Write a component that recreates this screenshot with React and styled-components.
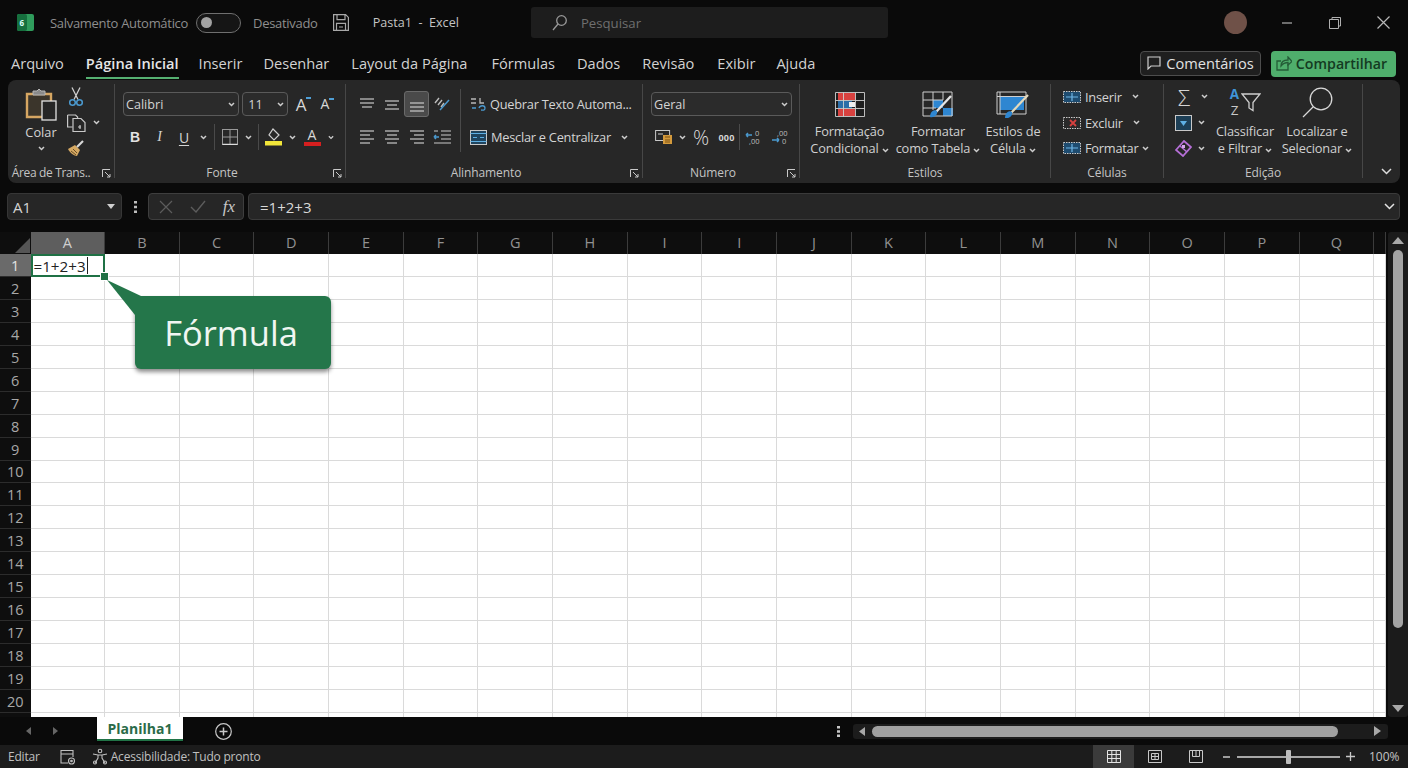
import React from 'react';
import styled, { createGlobalStyle } from 'styled-components';

const Global = createGlobalStyle`
  html, body { margin: 0; padding: 0; background: #0a0a0a; overflow: hidden; }
  * { box-sizing: border-box; }
`;
const FONT = `"Open Sans", "Noto Sans", sans-serif`;

const Page = styled.div`
  width: 1408px; height: 768px; background: #0a0a0a; color: #d4d4d4;
  font-family: ${FONT}; display: flex; flex-direction: column; overflow: hidden;
`;

/* ---------- title bar ---------- */
const TitleBar = styled.header`display: flex; align-items: center; height: 45px; padding-left: 17px; flex: none;`;
const Dim = styled.span`font-size: 13px; letter-spacing: -.3px; color: #8e8e8e; white-space: nowrap; margin-left: ${p => p.$ml || 0}px;`;
const Doc = styled.span`font-size: 12.6px; color: #c4c4c4; white-space: pre; margin-left: 9px;`;
const Toggle = styled.div`
  width: 45px; height: 20px; border: 1.5px solid #6f6f6f; border-radius: 10px; margin-left: 8px;
  display: flex; align-items: center; padding-left: 4px; background: #151515;
  &::before { content: ""; width: 11px; height: 11px; border-radius: 50%; background: #a2a2a2; }
`;
const SearchBox = styled.div`
  width: 357px; height: 31px; margin-left: 72px; background: #1d1d1d; border-radius: 3px;
  display: flex; align-items: center; gap: 14px; padding-left: 21px; font-size: 13.2px; color: #6f6f6f;
`;
const WinControls = styled.div`margin-left: auto; display: flex; align-items: center; padding-right: 1px;`;
const Avatar = styled.div`width: 23px; height: 23px; border-radius: 50%; background: #6f5148; margin-right: 16px;`;
const WinBtn = styled.div`width: 48px; display: flex; justify-content: center;`;

/* ---------- tabs ---------- */
const TabRow = styled.nav`display: flex; align-items: center; height: 35px; padding-left: 11px; flex: none;`;
const RibbonTab = styled.div`
  font-size: 14.6px; color: #d2d2d2; margin-right: ${p => p.$mr}px; white-space: nowrap; position: relative; line-height: 26px;
  font-weight: ${p => (p.$active ? 600 : 400)};
  ${p => p.$active && `color:#e6e6e6; &::after{content:"";position:absolute;left:0;right:0;bottom:-3px;height:2px;background:#55b071;}`}
`;
const TabActions = styled.div`margin-left: auto; display: flex; gap: 10px; padding-right: 12px; margin-top: 2px;`;
const CommentBtn = styled.div`
  width: 121px; height: 25px; border: 1px solid #4d4d4d; border-radius: 4px; background: #1f1f1f;
  display: flex; align-items: center; justify-content: center; gap: 5px; font-size: 14.6px; color: #e2e2e2; font-weight: 500;
`;
const ShareBtn = styled.div`
  width: 125px; height: 26px; border-radius: 4px; background: #4fae6c; padding-right: 4px;
  display: flex; align-items: center; justify-content: center; gap: 4px; font-size: 14.2px; color: #143a22; font-weight: 600;
`;

/* ---------- ribbon ---------- */
const Ribbon = styled.section`
  display: flex; flex: none; height: 103px; width: 1392px; margin-left: 8px; padding: 4px 0 5px;
  background: #272727; border-radius: 8px;
`;
const Group = styled.div`
  width: ${p => p.$w}px; flex: none; display: flex; flex-direction: column;
  ${p => !p.$last && 'border-right: 1px solid #474747;'}
`;
const GroupBody = styled.div`flex: 1; display: flex; min-height: 0;`;
const GroupFoot = styled.div`height: 12px; padding-top: 2px; display: flex; align-items: center; font-size: 12px; letter-spacing: -.1px; color: #c4c4c4; line-height: 10px;`;
const FootText = styled.span`flex: 1; text-align: center; white-space: nowrap; padding-right: ${p => p.$pr || 0}px; letter-spacing: ${p => p.$ls || 'inherit'};`;
const Launcher = styled.span`width: 16px; display: flex; justify-content: center;`;
const Stack = styled.div`display: flex; flex-direction: column; padding-top: ${p => p.$pt ?? 8}px; gap: ${p => p.$gap ?? 9}px; padding-left: ${p => p.$pl || 0}px;`;
const Row = styled.div`display: flex; align-items: center; height: ${p => p.$h || 24}px;`;
const Tool = styled.div`
  width: ${p => p.$w}px; height: ${p => p.$h || 24}px; flex: none; display: flex; align-items: center; justify-content: center;
  font-size: 13px; color: #d4d4d4; border-radius: 3px; margin-left: ${p => p.$ml || 0}px;
  ${p => p.$active && 'background:#4a4a4a; border:1px solid #6a6a6a; height:26px;'}
`;
const Select = styled.div`
  width: ${p => p.$w}px; height: 24px; border: 1px solid #5a5a5a; border-radius: 4px; background: #2b2b2b;
  display: flex; align-items: center; justify-content: space-between; padding: 0 3px 0 2px; font-size: 12.6px; color: #d4d4d4;
  margin-right: ${p => p.$mr || 0}px; flex: none;
`;
const VSep = styled.div`width: 1px; height: ${p => p.$h || 26}px; background: #4a4a4a; margin: ${p => p.$mt || 0}px ${p => p.$mr ?? 0}px 0 ${p => p.$ml ?? 0}px; flex: none;`;
const Label = styled.span`font-size: 12.8px; letter-spacing: -.25px; color: #d4d4d4; white-space: nowrap; margin-left: ${p => p.$ml || 0}px; margin-right: ${p => p.$mr || 0}px;`;
const PasteCol = styled.div`width: 50px; margin-left: 8px; display: flex; flex-direction: column; align-items: center; padding-top: 4px; flex: none;`;
const PasteText = styled.div`font-size: 12.8px; line-height: 18px; margin: 2px 0 5px;`;
const SmallRows = styled.div`display: flex; flex-direction: column; padding-left: ${p => p.$pl || 0}px; width: ${p => p.$w || 'auto'}; flex: none;`;
const SmallRow = styled.div`display: flex; align-items: center; height: 25.7px;`;
const BigBtn = styled.div`
  width: ${p => p.$w}px; flex: none; display: flex; flex-direction: column; align-items: center; padding-top: ${p => p.$pt ?? 7}px;
  margin-left: ${p => p.$ml || 0}px;
`;
const BigIcon = styled.div`height: ${p => p.$h || 26}px; display: flex; align-items: center; justify-content: center; margin-bottom: ${p => p.$mb ?? 6}px;`;
const BigText = styled.div`font-size: 12.8px; letter-spacing: -.15px; line-height: 17px; text-align: center; white-space: nowrap; color: #d0d0d0;`;
const BoldB = styled.span`font-weight: 800; font-size: 14px; color: #e2e2e2; font-family: "Liberation Sans", sans-serif;`;
const ItalicI = styled.span`font-style: italic; font-size: 14px; font-family: "Liberation Serif", serif;`;
const UnderU = styled.span`text-decoration: underline; font-size: 14px; text-underline-offset: 2px;`;
const GlyphA = styled.span`font-size: ${p => p.$s}px; color: #d8d8d8; position: relative; line-height: 1;`;
const Caret = styled.i`position: absolute; right: -5px; top: 1px; width: 5px; height: 2px; background: #4f9fd6;`;
const ColorA = styled.div`display: flex; flex-direction: column; align-items: center; width: 17px;`;
const ColorGlyph = styled.span`font-size: 14px; line-height: 13px; color: #d8d8d8;`;
const ColorBar = styled.i`width: 17px; height: 4px; background: #d61f1f; margin-top: 1px;`;
const Percent = styled.span`font-size: 20px; font-weight: 300; color: #dcdcdc;`;
const Thousand = styled.span`font-size: 9px; font-weight: 700; letter-spacing: .2px;`;
const Sigma = styled.span`font-size: 22px; font-weight: 300; line-height: 1;`;
const SortWrap = styled.div`display: flex; align-items: center; width: 34px; height: 30px;`;
const SortLetters = styled.div`display: flex; flex-direction: column; align-items: center; gap: 1px; width: 13px; flex: none;`;
const SortA = styled.span`font-size: 13.5px; font-weight: 700; line-height: 15px; color: #3f94d8;`;
const SortZ = styled.span`font-size: 13.5px; line-height: 15px; color: #c9c9c9;`;
const Collapse = styled.div`flex: 1; display: flex; align-items: flex-end; justify-content: center; padding: 0 0 3px 10px;`;

/* ---------- formula bar ---------- */
const FormulaBar = styled.div`display: flex; align-items: stretch; height: 27px; margin-top: 10px; padding: 0 8px 0 7px; flex: none;`;
const NameBox = styled.div`
  width: 115px; background: #262626; border: 1px solid #363636; border-radius: 4px; display: flex; align-items: center;
  justify-content: space-between; padding: 0 6px 0 5px; font-size: 15px; color: #d4d4d4;
`;
const Dots = styled.div`width: 26px; display: flex; align-items: center; justify-content: center;`;
const FxBox = styled.div`
  width: 96px; background: #262626; border: 1px solid #3e3e3e; border-radius: 4px; margin-right: 4px; display: flex; align-items: center; justify-content: space-between; padding: 0 8px 0 10px;
`;
const Fx = styled.span`font-family: "Liberation Serif", serif; font-style: italic; font-size: 17px; color: #c8c8c8;`;
const FormulaInput = styled.div`
  flex: 1; background: #262626; border: 1px solid #3a3a3a; border-radius: 4px; display: flex; align-items: center; justify-content: space-between;
  padding: 0 4px 0 11px; font-size: 15px; color: #d8d8d8;
`;

/* ---------- sheet ---------- */
const SheetWrap = styled.div`display: flex; height: 485px; margin-top: 12px; flex: none;`;
const GridArea = styled.div`width: 1386px; height: 485px; overflow: hidden; position: relative; flex: none;`;
const GridTable = styled.div`
  display: grid; grid-template-columns: 30.5px repeat(18, 74.67px) 1fr; grid-template-rows: 21.5px 23.5px repeat(20, 22.95px);
`;
const Corner = styled.div`background: #0e0e0e; display: flex; align-items: flex-end; justify-content: flex-end; padding: 0 1px 1px 0;`;
const ColHead = styled.div`
  background: ${p => (p.$sel ? '#5e5e5e' : '#0e0e0e')}; color: ${p => (p.$sel ? '#cfcfcf' : '#929292')};
  border-right: 1px solid #3c3c3c; font-size: 14.5px; display: flex; align-items: center; justify-content: center;
`;
const RowHead = styled.div`
  background: ${p => (p.$sel ? '#6a6a6a' : '#0e0e0e')}; color: ${p => (p.$sel ? '#e2e2e2' : '#a8a8a8')}; padding-top: 1px;
  font-size: 14.5px; display: flex; align-items: center; justify-content: center; border-bottom: 1px solid #2c2c2c;
`;
const Cell = styled.div`background: #fff; border-right: 1px solid #dadada; border-bottom: 1px solid #dadada;`;
const ActiveCell = styled.div`
  background: #fff; border: 2px solid #1f7145; position: relative; font-size: 15.2px; color: #222; line-height: 20px; padding: 1px 0 0 1px;
  display: flex; align-items: center; white-space: nowrap;
  &::after { content: ""; position: absolute; right: -6px; bottom: -6px; width: 7px; height: 7px; background: #1f7145; border: 1px solid #fff; }
`;
const TextCaret = styled.i`width: 1px; height: 17px; background: #222; margin-left: 1px;`;
const Callout = styled.div`
  position: absolute; left: 135px; top: 64px; width: 196px; height: 73px; background: #24764a; border-radius: 6px; padding-right: 4px;
  box-shadow: 0 3px 4px rgba(0,0,0,.45); color: #f0f6f2; font-size: 34.5px; display: flex; align-items: center; justify-content: center; z-index: 2;
`;
const CalloutTail = styled.svg`position: absolute; left: -30px; top: -20px;`;
const VScroll = styled.div`
  width: 20px; margin-left: 2px; background: #1b1b1b; border-radius: 3px; display: flex; flex-direction: column; align-items: center; padding: 5px 0 5px; flex: none;
`;
const VThumb = styled.div`width: 10px; height: 378px; margin: 6px 0 auto; background: #a3a3a3; border-radius: 5px;`;

/* ---------- sheet tabs ---------- */
const SheetBar = styled.div`display: flex; align-items: flex-start; height: 28px; flex: none;`;
const NavArrows = styled.div`width: 97px; height: 28px; display: flex; align-items: center; padding-left: 26px; gap: 22px;`;
const SheetTab = styled.div`
  width: 86px; height: 24px; background: #fff; border-bottom: 2px solid #217346; color: #2b6b49; font-weight: 700; font-size: 14px;
  display: flex; align-items: center; justify-content: center; box-shadow: 0 1px 2px rgba(0,0,0,.5);
`;
const AddBtn = styled.div`width: 80px; height: 28px; display: flex; align-items: center; justify-content: center;`;
const BarRight = styled.div`margin-left: auto; display: flex; align-items: center; height: 28px; padding-right: 20px;`;
const HScroll = styled.div`
  width: 535px; height: 15px; margin-left: 13px; background: #1c1c1c; border-radius: 3px; display: flex; align-items: center; padding: 0 6px;
`;
const HThumb = styled.div`width: 466px; height: 11px; background: #a0a0a0; border-radius: 6px; margin-left: 7px; margin-right: 36px;`;

/* ---------- status ---------- */
const StatusBar = styled.footer`display: flex; align-items: center; height: 23px; background: #1c1c1c; font-size: 12px; letter-spacing: -.2px; color: #c0c0c0; flex: none; padding-left: 8px;`;
const StatusItem = styled.span`margin-left: ${p => p.$ml || 0}px; white-space: nowrap; display: flex;`;
const StatusRight = styled.div`margin-left: auto; display: flex; align-items: center; height: 100%;`;
const ViewBtn = styled.div`
  width: 41px; height: 100%; display: flex; align-items: center; justify-content: center; ${p => p.$active && 'background:#3b3b3b;'}
`;
const ZoomMinus = styled.span`margin-left: 6px; display: flex;`;
const Slider = styled.div`
  width: 103px; height: 2px; background: #a8a8a8; position: relative; margin: 0 6px;
  &::after { content: ""; position: absolute; left: 49px; top: -6px; width: 5px; height: 14px; background: #bdbdbd; border-radius: 1px; }
`;
const Zoom = styled.span`margin-left: 14px; width: 39px; font-size: 12px; letter-spacing: 0; color: #c4c4c4;`;

/* ---------- icons ---------- */
const G = '#c9c9c9';
const Ic = ({ w, h, children, sw = 1.2 }) => (
  <svg width={w} height={h} viewBox={`0 0 ${w} ${h}`} fill="none" stroke={G} strokeWidth={sw}>{children}</svg>
);
const Chev = ({ c = '#cdcdcd' }) => (
  <Ic w={7} h={5} sw={1.5}><path d="M1 1l2.500 2.500L6 1" stroke={c} /></Ic>
);
const Lines = ({ rows }) => (
  <Ic w={18} h={16}>{rows.map(([a, b, y], i) => <path key={i} d={`M${a} ${y}H${b}`} />)}</Ic>
);
const LauncherIcon = () => (
  <Ic w={9} h={9} sw={1}><path d="M.5 8V.5H8M3 3l5 5M5 8h3V5" /></Ic>
);
const Logo = () => (
  <svg width="17" height="17" viewBox="0 0 17 17">
    <rect width="17" height="17" rx="2" fill="#2f9c5c" />
    <rect width="10" height="17" rx="2" fill="#166f3e" />
    <text x="2.5" y="12" fontSize="8" fontWeight="700" fill="#dff" fontFamily="Open Sans">6</text>
  </svg>
);
const SaveIcon = () => (
  <Ic w={16} h={17} sw={1.2}><path d="M.6.6h12l2.800 2.800v13H.6zM4 .6v5h8v-5M3.500 16.400v-7h9v7M6 13h4" stroke="#a8a8a8" /></Ic>
);
const SearchGlyph = () => (
  <Ic w={15} h={16} sw={1.3}><circle cx="9.500" cy="5.500" r="4.800" stroke="#999" /><path d="M6 9l-5 6" stroke="#999" /></Ic>
);
const PasteIcon = () => (
  <svg width="32" height="33" viewBox="0 0 32 33" fill="none">
    <path d="M2 6h24v23H2z" fill="#3b352b" stroke="#d6a662" strokeWidth="2.400" />
    <path d="M8 6V3h4l2-2 2 2h4v4H8z" fill="#8a8a8a" stroke="#b5b5b5" />
    <rect x="17" y="13" width="14" height="19" fill="#262626" stroke="#e2e2e2" strokeWidth="1.300" />
  </svg>
);
const Scissors = () => (
  <svg width="14" height="20" viewBox="0 0 14 20" fill="none">
    <path d="M3 .5l6 12M11 .5l-6 12" stroke="#cfcfcf" strokeWidth="1.300" />
    <circle cx="3.500" cy="15.500" r="2.800" stroke="#4b9ad0" strokeWidth="1.500" />
    <circle cx="10.500" cy="15.500" r="2.800" stroke="#4b9ad0" strokeWidth="1.500" />
  </svg>
);
const CopyIcon = () => (
  <Ic w={19} h={18}><path d="M.6 1h8l2 2v1M.6 1v12h5" /><path d="M6 4.500h8l4 4v9H6z" /><path d="M11 13h3M13 11v4" /></Ic>
);
const Brush = () => (
  <svg width="18" height="17" viewBox="0 0 18 17" fill="none">
    <path d="M1 9l7-4 5 5-3 6C7 16 3 13 1 9z" fill="#d5a862" />
    <path d="M10 7l6-6" stroke="#d8d8d8" strokeWidth="2.200" />
    <path d="M4 11l5 4M6 9l4 4" stroke="#6b4f26" />
  </svg>
);
const BorderIcon = () => (
  <Ic w={16} h={16} sw={1}><rect x=".5" y=".5" width="15" height="15" stroke="#999" /><path d="M8 .5v15M.5 8h15" stroke="#999" /><path d="M.5 15.500h15" stroke="#ddd" strokeWidth="1.500" /></Ic>
);
const FillIcon = () => (
  <svg width="17" height="18" viewBox="0 0 17 18" fill="none">
    <path d="M8 1l6 6-5 5-5-5z" stroke="#cfcfcf" strokeWidth="1.200" />
    <rect y="13" width="17" height="4.500" fill="#f2e63a" />
  </svg>
);
const WrapDiag = () => (
  <svg width="17" height="16" viewBox="0 0 17 16" fill="none">
    <path d="M2 7l4-5M5 9l4-5M8 11l3-4" stroke="#bdbdbd" strokeWidth="1.400" />
    <path d="M7 14L16 4" stroke="#4b9ad0" strokeWidth="1.500" />
  </svg>
);
const IndentIcon = () => (
  <svg width="18" height="14" viewBox="0 0 18 14" fill="none" stroke="#c9c9c9" strokeWidth="1.200">
    <path d="M8 1h10M8 5h10M8 9h10M1 13h17M1 1h4" />
    <path d="M1 7h5M1 7l2-2M1 7l2 2" stroke="#4b9ad0" strokeWidth="1.500" />
  </svg>
);
const WrapText = () => (
  <svg width="16" height="16" viewBox="0 0 16 16" fill="none">
    <path d="M1 3h5M1 7h5M10 2v5h4" stroke="#b8b8b8" strokeWidth="1.300" />
    <path d="M2 12h4M9 12c1-3 6-3 6 0s-3 2-4 2" stroke="#4b9ad0" strokeWidth="1.300" />
  </svg>
);
const MergeIcon = () => (
  <svg width="17" height="15" viewBox="0 0 17 15" fill="none">
    <rect x=".5" y=".5" width="16" height="14" fill="#20445e" stroke="#c9c9c9" />
    <path d="M3 7.500h4M14 7.500h-4M.5 3.500h16M.5 11.500h16" stroke="#5fb0e4" strokeWidth="1.100" />
  </svg>
);
const AcctIcon = () => (
  <svg width="18" height="16" viewBox="0 0 18 16" fill="none">
    <rect x=".6" y="1.500" width="14" height="10" stroke="#c9c9c9" />
    <path d="M3 5h5" stroke="#c9c9c9" />
    <rect x="8" y="6" width="9" height="9" fill="#d49a3c" />
    <path d="M10 8h5M10 11h5M10 13h5" stroke="#7a5314" />
  </svg>
);
const DecUp = () => (
  <svg width="20" height="16" viewBox="0 0 20 16">
    <path d="M1 6h6M1 6l2-2M1 6l2 2" stroke="#4b9ad0" strokeWidth="1.500" fill="none" />
    <text x="10" y="7" fontSize="7.500" fill="#bdbdbd" fontFamily="Open Sans">0</text>
    <text x="4" y="15" fontSize="7.500" fill="#bdbdbd" fontFamily="Open Sans">,00</text>
  </svg>
);
const DecDown = () => (
  <svg width="20" height="16" viewBox="0 0 20 16">
    <text x="6" y="7" fontSize="7.500" fill="#bdbdbd" fontFamily="Open Sans">,00</text>
    <path d="M1 11h7M8 11l-2-2M8 11l-2 2" stroke="#4b9ad0" strokeWidth="1.500" fill="none" />
    <text x="11" y="15" fontSize="7.500" fill="#bdbdbd" fontFamily="Open Sans">0</text>
  </svg>
);
const CondFormat = () => (
  <svg width="30" height="25" viewBox="0 0 30 25" fill="none">
    <rect x=".5" y=".5" width="29" height="24" fill="#1e1e1e" />
    <rect x="3" y="1" width="17" height="7" fill="#d8413f" />
    <rect x="3" y="17" width="17" height="7" fill="#d8413f" />
    <rect x="3" y="9" width="14" height="7" fill="#2c6ea8" />
    <rect x="14" y="10" width="6" height="5" fill="#eee" />
    <path d="M.5.500h29v24H.5zM.5 8.500h29M.5 16.500h29M8.500.5v24M20.500.5v24" stroke="#cfcfcf" strokeWidth=".9" />
  </svg>
);
const TableFormat = () => (
  <svg width="33" height="27" viewBox="0 0 33 27" fill="none">
    <rect x="11" y="9" width="10" height="8" fill="#2e86d1" />
    <rect x="21" y="17" width="10" height="8" fill="#2e86d1" />
    <path d="M1 1h29v24H1zM1 9h20M1 17h13M11 1v18M21 1v8" stroke="#cfcfcf" strokeWidth="1" />
    <path d="M14 21L29 5" stroke="#e4e4e4" strokeWidth="2.400" />
    <path d="M8 26c0-5 4-8 7-6 1 4-3 7-7 6z" fill="#2e86d1" />
  </svg>
);
const CellStyle = () => (
  <svg width="34" height="27" viewBox="0 0 34 27" fill="none">
    <rect x="4" y="6" width="24" height="13" fill="#2e86d1" />
    <path d="M1 1h29v22H1zM1 5.500h29M4 1v22" stroke="#cfcfcf" strokeWidth="1" />
    <path d="M15 22L32 4" stroke="#e4d9bb" strokeWidth="2.200" />
    <path d="M9 27c0-5 4-8 7-6 1 4-3 7-7 6z" fill="#2e86d1" />
  </svg>
);
const CellIcon = ({ kind }) => (
  <svg width="18" height="16" viewBox="0 0 18 16" fill="none">
    <rect x=".5" y="2.500" width="17" height="11" fill={kind === 'del' ? '#2a2a2a' : '#1e4c70'} stroke="#c9c9c9" strokeDasharray="1.500 1" />
    {kind === 'del'
      ? <path d="M7 5l6 6M13 5l-6 6" stroke="#d8413f" strokeWidth="1.800" />
      : <path d="M3 8h12M9 4v8" stroke="#6fb6e6" strokeWidth="1.200" />}
  </svg>
);
const FillDown = () => (
  <svg width="17" height="16" viewBox="0 0 17 16" fill="none">
    <rect x=".5" y=".5" width="16" height="15" fill="#1d3f56" stroke="#c9c9c9" />
    <path d="M5 6h7l-3.500 5z" fill="#5fb0e4" />
  </svg>
);
const Eraser = () => (
  <svg width="17" height="17" viewBox="0 0 17 17" fill="none">
    <path d="M1 10l8-9 7 6-8 9z" stroke="#b56fd6" strokeWidth="1.800" />
    <path d="M5 6l7 6" stroke="#b56fd6" strokeWidth="1.600" />
    <rect x="7" y="5" width="3" height="3" fill="#d6a6ea" />
  </svg>
);
const Funnel = () => (
  <svg width="20" height="19" viewBox="0 0 20 19" fill="none">
    <path d="M1 1h18l-7 8.500v8l-4-2.500V9.500z" stroke="#cfcfcf" strokeWidth="1.300" />
  </svg>
);
const FindIcon = () => (
  <svg width="31" height="31" viewBox="0 0 31 31" fill="none" stroke="#d8d8d8" strokeWidth="1.300">
    <circle cx="19" cy="12" r="10.800" />
    <path d="M11.500 19.500L1 30" />
  </svg>
);
const Cmnt = () => <Ic w={14} h={14}><path d="M1 1h12v9H4l-3 3z" stroke="#cfcfcf" /></Ic>;
const ShareIcon = () => (
  <svg width="16" height="15" viewBox="0 0 16 15" fill="none" stroke="#245c37" strokeWidth="1.300">
    <path d="M12 8v6H1V5h4" /><path d="M5 10c0-4 3-6 7-6V1l4 4.500L12 9V6.500c-3 0-5 1-7 3.500z" />
  </svg>
);
const CalendarIcon = () => (
  <svg width="15" height="16" viewBox="0 0 15 16" fill="none" stroke="#c0c0c0" strokeWidth="1.100">
    <path d="M8 14H1V1.500h12V8M1 5h12" /><circle cx="11.500" cy="12" r="3" /><circle cx="11.500" cy="12" r=".8" fill="#c0c0c0" />
  </svg>
);
const A11yIcon = () => (
  <svg width="17" height="17" viewBox="0 0 17 17" fill="none" stroke="#c0c0c0" strokeWidth="1.100">
    <circle cx="8" cy="3" r="1.800" /><path d="M1 6l5 1h4l5-1M6 7v3l-3 5M10 7v3l3 5" />
    <circle cx="3" cy="14.500" r="1.500" /><circle cx="13" cy="14.500" r="1.500" />
  </svg>
);

/* ---------- data ---------- */
const tabs = [
  ['Arquivo', 22], ['Página Inicial', 20], ['Inserir', 21], ['Desenhar', 22], ['Layout da Página', 24],
  ['Fórmulas', 22], ['Dados', 22], ['Revisão', 23], ['Exibir', 21], ['Ajuda', 0],
];
const cols = ['A', 'B', 'C', 'D', 'E', 'F', 'G', 'H', 'I', 'I', 'J', 'K', 'L', 'M', 'N', 'O', 'P', 'Q', ''];
const rows = Array.from({ length: 21 }, (_, i) => i + 1);

const Foot = ({ text, launcher, pr, ls }) => (
  <GroupFoot>
    <FootText $pr={pr} $ls={ls}>{text}</FootText>
    {launcher && <Launcher><LauncherIcon /></Launcher>}
  </GroupFoot>
);

export default function App() {
  return (
    <Page>
      <Global />
      <TitleBar>
        <Logo />
        <Dim $ml={16}>Salvamento Automático</Dim>
        <Toggle />
        <Dim $ml={12}>Desativado</Dim>
        <Tool $w={46}><SaveIcon /></Tool>
        <Doc>Pasta1  -  Excel</Doc>
        <SearchBox><SearchGlyph />Pesquisar</SearchBox>
        <WinControls>
          <Avatar />
          <WinBtn><Ic w={10} h={2}><path d="M0 1h10" stroke="#b0b0b0" /></Ic></WinBtn>
          <WinBtn><Ic w={12} h={12} sw={1}><path d="M3 2.500V.5h8.500V9H9.500M.5 2.500h9v9h-9z" stroke="#b0b0b0" /></Ic></WinBtn>
          <WinBtn><Ic w={13} h={13}><path d="M.5.500l12 12M12.500.500l-12 12" stroke="#b8b8b8" /></Ic></WinBtn>
        </WinControls>
      </TitleBar>

      <TabRow>
        {tabs.map(([t, m], i) => <RibbonTab key={t} $mr={m} $active={i === 1}>{t}</RibbonTab>)}
        <TabActions>
          <CommentBtn><Cmnt />Comentários</CommentBtn>
          <ShareBtn><ShareIcon />Compartilhar</ShareBtn>
        </TabActions>
      </TabRow>

      <Ribbon>
        <Group $w={107}>
          <GroupBody>
            <PasteCol>
              <PasteIcon />
              <PasteText>Colar</PasteText>
              <Chev />
            </PasteCol>
            <SmallRows>
              <SmallRow><Tool $w={20}><Scissors /></Tool></SmallRow>
              <SmallRow><Tool $w={20}><CopyIcon /></Tool><Tool $w={12} $ml={4}><Chev /></Tool></SmallRow>
              <SmallRow><Tool $w={20}><Brush /></Tool></SmallRow>
            </SmallRows>
          </GroupBody>
          <Foot text="Área de Trans.." launcher pr={4} ls="-.35px" />
        </Group>

        <Group $w={231}>
          <GroupBody>
            <Stack $pl={8}>
              <Row>
                <Select $w={116} $mr={3}>Calibri<Chev /></Select>
                <Select $w={46} $mr={1}>&nbsp;11<Chev /></Select>
                <Tool $w={24}><GlyphA $s={17}>A<Caret /></GlyphA></Tool>
                <Tool $w={24}><GlyphA $s={14}>A<Caret /></GlyphA></Tool>
              </Row>
              <Row>
                <Tool $w={24}><BoldB>B</BoldB></Tool>
                <Tool $w={25}><ItalicI>I</ItalicI></Tool>
                <Tool $w={24}><UnderU>U</UnderU></Tool>
                <Tool $w={14}><Chev /></Tool>
                <VSep $ml={4} />
                <Tool $w={29}><BorderIcon /></Tool>
                <Tool $w={8}><Chev /></Tool>
                <VSep $ml={6} />
                <Tool $w={29}><FillIcon /></Tool>
                <Tool $w={8}><Chev /></Tool>
                <Tool $w={32}><ColorA><ColorGlyph>A</ColorGlyph><ColorBar /></ColorA></Tool>
                <Tool $w={6}><Chev /></Tool>
              </Row>
            </Stack>
          </GroupBody>
          <Foot text="Fonte" launcher />
        </Group>

        <Group $w={297}>
          <GroupBody>
            <Stack $pl={8}>
              <Row>
                <Tool $w={25}><Lines rows={[[2, 16, 3], [2, 16, 7], [4, 14, 11]]} /></Tool>
                <Tool $w={25}><Lines rows={[[2, 16, 5], [4, 14, 9], [2, 16, 13]]} /></Tool>
                <Tool $w={25} $active><Lines rows={[[2, 16, 7], [2, 16, 11], [2, 16, 15]]} /></Tool>
                <Tool $w={25}><WrapDiag /></Tool>
              </Row>
              <Row>
                <Tool $w={25}><Lines rows={[[2, 16, 2], [2, 12, 6], [2, 16, 10], [2, 12, 14]]} /></Tool>
                <Tool $w={25}><Lines rows={[[2, 16, 2], [4, 14, 6], [2, 16, 10], [4, 14, 14]]} /></Tool>
                <Tool $w={25}><Lines rows={[[2, 16, 2], [6, 16, 6], [2, 16, 10], [6, 16, 14]]} /></Tool>
                <Tool $w={25}><IndentIcon /></Tool>
              </Row>
            </Stack>
            <VSep $h={63} $ml={6} $mr={9} $mt={5} />
            <Stack>
              <Row><WrapText /><Label $ml={4}>Quebrar Texto Automa...</Label></Row>
              <Row><MergeIcon /><Label $ml={4}>Mesclar e Centralizar</Label><Tool $w={10} $ml={9}><Chev /></Tool></Row>
            </Stack>
          </GroupBody>
          <Foot text="Alinhamento" launcher />
        </Group>

        <Group $w={157}>
          <GroupBody>
            <Stack $pl={8}>
              <Row><Select $w={141}>Geral<Chev /></Select></Row>
              <Row>
                <Tool $w={25}><AcctIcon /></Tool>
                <Tool $w={12}><Chev /></Tool>
                <Tool $w={26}><Percent>%</Percent></Tool>
                <Tool $w={25}><Thousand>000</Thousand></Tool>
                <VSep />
                <Tool $w={29}><DecUp /></Tool>
                <Tool $w={24}><DecDown /></Tool>
              </Row>
            </Stack>
          </GroupBody>
          <Foot text="Número" launcher />
        </Group>

        <Group $w={251}>
          <GroupBody>
            <BigBtn $w={93} $ml={3}>
              <BigIcon><CondFormat /></BigIcon>
              <BigText>Formatação<br />Condicional <Chev /></BigText>
            </BigBtn>
            <BigBtn $w={84}>
              <BigIcon><TableFormat /></BigIcon>
              <BigText>Formatar<br />como Tabela <Chev /></BigText>
            </BigBtn>
            <BigBtn $w={64} $ml={1}>
              <BigIcon><CellStyle /></BigIcon>
              <BigText>Estilos de<br />Célula <Chev /></BigText>
            </BigBtn>
          </GroupBody>
          <Foot text="Estilos" />
        </Group>

        <Group $w={113}>
          <GroupBody>
            <SmallRows $pl={12}>
              <SmallRow><CellIcon /><Label $ml={4} $mr={10}>Inserir</Label><Chev /></SmallRow>
              <SmallRow><CellIcon kind="del" /><Label $ml={4} $mr={10}>Excluir</Label><Chev /></SmallRow>
              <SmallRow><CellIcon /><Label $ml={4} $mr={4}>Formatar</Label><Chev /></SmallRow>
            </SmallRows>
          </GroupBody>
          <Foot text="Células" />
        </Group>

        <Group $w={199}>
          <GroupBody>
            <SmallRows $pl={11} $w="46px">
              <SmallRow><Tool $w={18}><Sigma>Σ</Sigma></Tool><Tool $w={12} $ml={5}><Chev /></Tool></SmallRow>
              <SmallRow><FillDown /><Tool $w={12} $ml={3}><Chev /></Tool></SmallRow>
              <SmallRow><Eraser /><Tool $w={12} $ml={3}><Chev /></Tool></SmallRow>
            </SmallRows>
            <BigBtn $w={70} $pt={3}>
              <BigIcon $h={31} $mb={5}>
                <SortWrap>
                  <SortLetters><SortA>A</SortA><SortZ>Z</SortZ></SortLetters>
                  <Funnel />
                </SortWrap>
              </BigIcon>
              <BigText>Classificar<br />e Filtrar <Chev /></BigText>
            </BigBtn>
            <BigBtn $w={74} $pt={3}>
              <BigIcon $h={31} $mb={5}><FindIcon /></BigIcon>
              <BigText>Localizar e<br />Selecionar <Chev /></BigText>
            </BigBtn>
          </GroupBody>
          <Foot text="Edição" />
        </Group>

        <Group $w={37} $last>
          <Collapse><Ic w={11} h={7} sw={1.5}><path d="M1 1l4.500 4.500L10 1" stroke="#dcdcdc" /></Ic></Collapse>
        </Group>
      </Ribbon>

      <FormulaBar>
        <NameBox>A1<svg width="8" height="5" viewBox="0 0 8 5"><path d="M0 0h8L4 5z" fill="#cfcfcf" /></svg></NameBox>
        <Dots><svg width="3" height="12" viewBox="0 0 3 12"><path d="M0 0h3v2.500H0zM0 4.700h3v2.500H0zM0 9.500h3V12H0z" fill="#bdbdbd" /></svg></Dots>
        <FxBox>
          <Ic w={14} h={14}><path d="M1 1l12 12M13 1L1 13" stroke="#5c5c5c" /></Ic>
          <Ic w={16} h={13} sw={1.4}><path d="M1 7l5 5L15 1" stroke="#5c5c5c" /></Ic>
          <Fx>fx</Fx>
        </FxBox>
        <FormulaInput>=1+2+3<Ic w={11} h={7} sw={1.5}><path d="M1 1l4.500 4.500L10 1" stroke="#e4e4e4" /></Ic></FormulaInput>
      </FormulaBar>

      <SheetWrap>
        <GridArea>
          <GridTable>
            <Corner><svg width="15" height="15" viewBox="0 0 15 15"><path d="M15 0v15H0z" fill="#555" /></svg></Corner>
            {cols.map((c, i) => <ColHead key={i} $sel={i === 0}>{c}</ColHead>)}
            {rows.map(r => (
              <React.Fragment key={r}>
                <RowHead $sel={r === 1}>{r <= 20 ? r : ''}</RowHead>
                {cols.map((c, i) => (r === 1 && i === 0
                  ? <ActiveCell key={i}>=1+2+3<TextCaret /></ActiveCell>
                  : <Cell key={i} />))}
              </React.Fragment>
            ))}
          </GridTable>
          <Callout>
            <CalloutTail width="60" height="60" viewBox="0 0 60 60"><path d="M2 4L36 20V39H30z" fill="#24764a" /></CalloutTail>
            Fórmula
          </Callout>
        </GridArea>
        <VScroll>
          <svg width="12" height="7" viewBox="0 0 12 7"><path d="M6 0l6 7H0z" fill="#a8a8a8" /></svg>
          <VThumb />
          <svg width="12" height="7" viewBox="0 0 12 7"><path d="M0 0h12L6 7z" fill="#a8a8a8" /></svg>
        </VScroll>
      </SheetWrap>

      <SheetBar>
        <NavArrows>
          <svg width="5" height="8" viewBox="0 0 5 8"><path d="M5 0v8L0 4z" fill="#666" /></svg>
          <svg width="5" height="8" viewBox="0 0 5 8"><path d="M0 0v8l5-4z" fill="#666" /></svg>
        </NavArrows>
        <SheetTab>Planilha1</SheetTab>
        <AddBtn><Ic w={17} h={17} sw={1.2}><circle cx="8.500" cy="8.500" r="7.800" stroke="#c8c8c8" /><path d="M8.500 4.500v8M4.500 8.500h8" stroke="#c8c8c8" strokeWidth="1.500" /></Ic></AddBtn>
        <BarRight>
          <svg width="3" height="11" viewBox="0 0 3 11"><path d="M0 0h3v2.500H0zM0 4.200h3v2.500H0zM0 8.500h3V11H0z" fill="#c8c8c8" /></svg>
          <HScroll>
            <svg width="6" height="9" viewBox="0 0 6 9"><path d="M6 0v9L0 4.500z" fill="#a8a8a8" /></svg>
            <HThumb />
            <svg width="7" height="10" viewBox="0 0 7 10"><path d="M0 0v10l7-5z" fill="#a8a8a8" /></svg>
          </HScroll>
        </BarRight>
      </SheetBar>

      <StatusBar>
        Editar
        <StatusItem $ml={20}><CalendarIcon /></StatusItem>
        <StatusItem $ml={17}><A11yIcon /></StatusItem>
        <StatusItem $ml={2}>Acessibilidade: Tudo pronto</StatusItem>
        <StatusRight>
          <ViewBtn $active><Ic w={14} h={13} sw={1}><path d="M.5.500h13v12H.5zM.5 4.500h13M.5 8.500h13M4.800.5v12M9.200.5v12" stroke="#e4e4e4" /></Ic></ViewBtn>
          <ViewBtn><Ic w={14} h={13} sw={1}><path d="M.5.500h13v12H.5zM3.500 3.500h7v6h-7zM7 3.500v6M3.500 6.500h7" stroke="#c8c8c8" /></Ic></ViewBtn>
          <ViewBtn><Ic w={14} h={13} sw={1}><path d="M.5.500h13v12H.5zM3.500.5v6h7V.5M7 .5v6" stroke="#c8c8c8" /></Ic></ViewBtn>
          <ZoomMinus><Ic w={9} h={2}><path d="M1 1h7" stroke="#c8c8c8" strokeWidth="1.500" /></Ic></ZoomMinus>
          <Slider />
          <Ic w={9} h={9}><path d="M0 4.500h9M4.500 0v9" stroke="#c8c8c8" strokeWidth="1.300" /></Ic>
          <Zoom>100%</Zoom>
        </StatusRight>
      </StatusBar>
    </Page>
  );
}
